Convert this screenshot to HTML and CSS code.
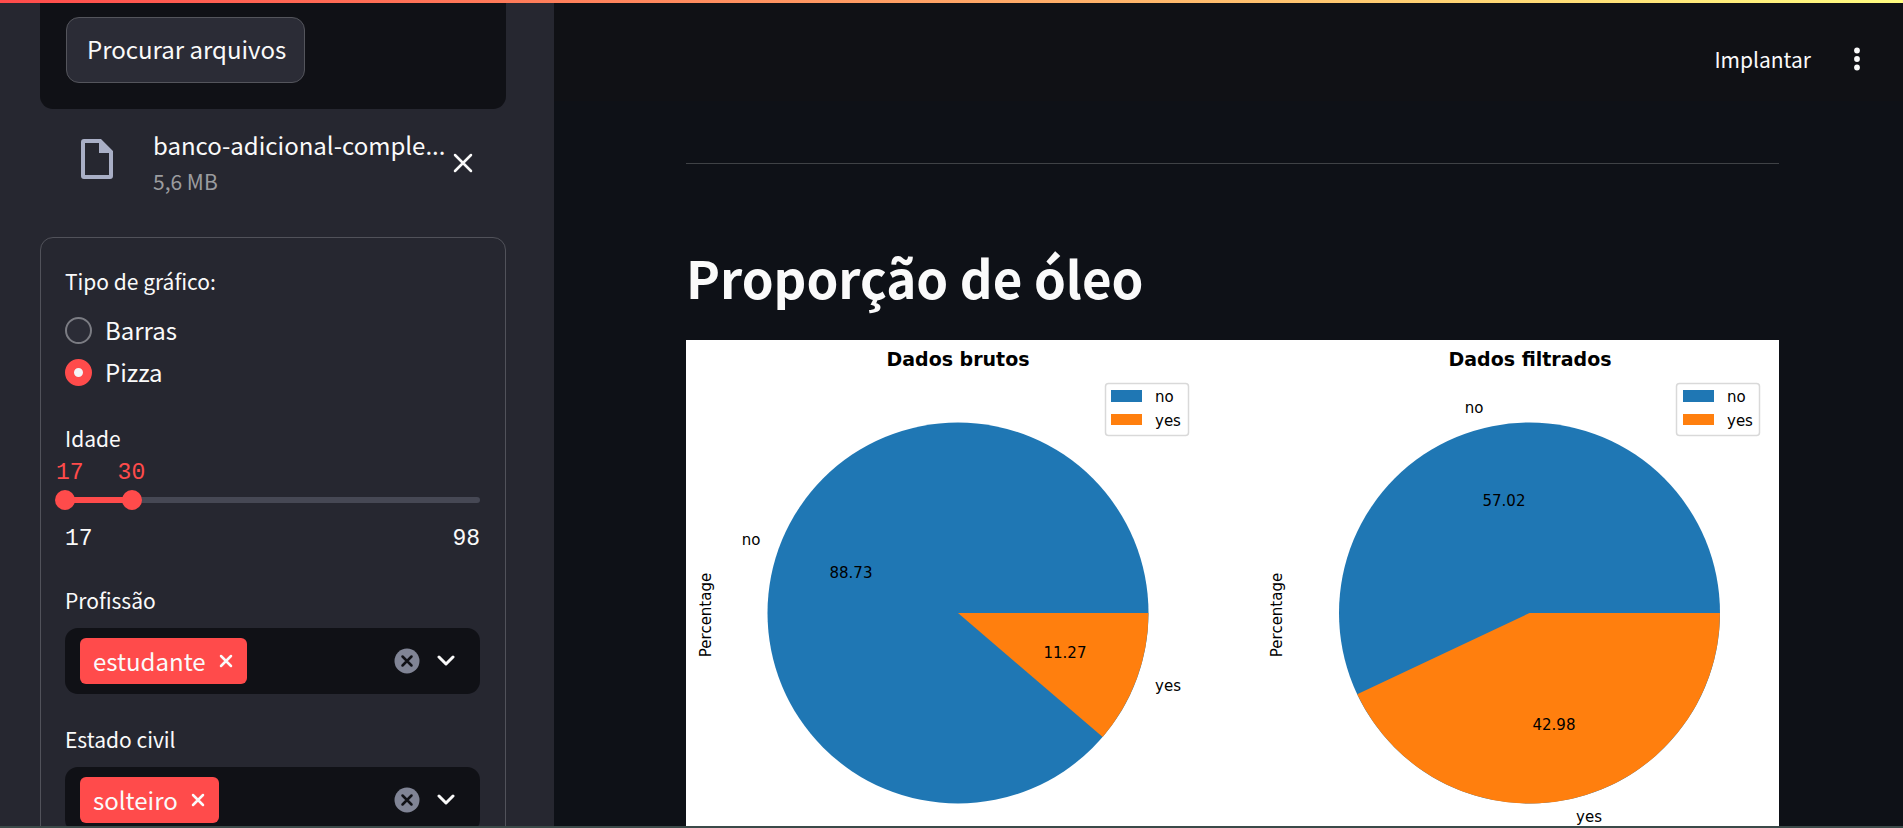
FILE: index.html
```html
<!DOCTYPE html>
<html lang="pt">
<head>
<meta charset="utf-8">
<title>Proporção de óleo</title>
<link rel="stylesheet" href="styles.css">
</head>
<body>
<div class="decoration"></div>
<div class="app">
  <aside class="sidebar">
    <div class="dropzone">
      <button class="browse" type="button">Procurar arquivos</button>
    </div>
    <div class="file">
      <svg class="file-icon" viewBox="0 0 32 40" aria-hidden="true"><path fill-rule="evenodd" d="M3 0H20L32 12V37a3 3 0 0 1-3 3H3a3 3 0 0 1-3-3V3a3 3 0 0 1 3-3ZM4 4V36H28V14H18V4Z"/></svg>
      <div class="file-text">
        <span class="file-name">banco-adicional-comple...</span>
        <span class="file-size">5,6 MB</span>
      </div>
      <button class="icon-button" type="button" aria-label="Remover arquivo">
        <svg class="icon-close" viewBox="0 0 20 20"><path d="M2 2 18 18M18 2 2 18"/></svg>
      </button>
    </div>
    <form class="filters">
      <fieldset class="field radios">
        <legend class="label">Tipo de gráfico:</legend>
        <label class="radio"><input type="radio" name="tipo"><span>Barras</span></label>
        <label class="radio"><input type="radio" name="tipo" checked><span>Pizza</span></label>
      </fieldset>
      <div class="field">
        <label class="label" for="idade-min">Idade</label>
        <div class="values">
          <output class="value value-first" for="idade-min">17</output>
          <output class="value" for="idade-max" style="left: 16%">30</output>
        </div>
        <div class="slider">
          <div class="track"><div class="range" style="width: 16%"></div></div>
          <input id="idade-min" class="thumb" type="range" min="17" max="98" value="17">
          <input class="thumb" type="range" min="17" max="98" value="30" id="idade-max" aria-label="Idade máxima">
        </div>
        <div class="bounds"><span>17</span><span>98</span></div>
      </div>
      <div class="field">
        <label class="label" for="profissao">Profissão</label>
        <div class="select">
          <span class="tag">estudante<button class="tag-remove" type="button" aria-label="Remover estudante"><svg viewBox="0 0 14 14"><path d="M2 2 12 12M12 2 2 12"/></svg></button></span>
          <input class="select-input" id="profissao" type="text">
          <button class="icon-button" type="button" aria-label="Limpar profissão"><svg class="icon-clear" viewBox="0 0 26 26"><circle cx="13" cy="13" r="12.5"/><path d="M8.500 8.500 17.500 17.500M17.500 8.500 8.500 17.500"/></svg></button>
          <button class="icon-button" type="button" aria-label="Abrir profissão"><svg class="icon-chevron" viewBox="0 0 18 12"><path d="M2 2 9 9 16 2"/></svg></button>
        </div>
      </div>
      <div class="field">
        <label class="label" for="estado">Estado civil</label>
        <div class="select">
          <span class="tag">solteiro<button class="tag-remove" type="button" aria-label="Remover solteiro"><svg viewBox="0 0 14 14"><path d="M2 2 12 12M12 2 2 12"/></svg></button></span>
          <input class="select-input" id="estado" type="text">
          <button class="icon-button" type="button" aria-label="Limpar estado civil"><svg class="icon-clear" viewBox="0 0 26 26"><circle cx="13" cy="13" r="12.5"/><path d="M8.500 8.500 17.500 17.500M17.500 8.500 8.500 17.500"/></svg></button>
          <button class="icon-button" type="button" aria-label="Abrir estado civil"><svg class="icon-chevron" viewBox="0 0 18 12"><path d="M2 2 9 9 16 2"/></svg></button>
        </div>
      </div>
    </form>
  </aside>
  <main class="main">
    <header class="toolbar">
      <button class="deploy" type="button">Implantar</button>
      <button class="icon-button" type="button" aria-label="Menu"><svg class="icon-dots" viewBox="0 0 6 24"><circle cx="3" cy="3.500" r="2.900"/><circle cx="3" cy="12" r="2.900"/><circle cx="3" cy="20.500" r="2.900"/></svg></button>
    </header>
    <div class="content">
      <hr class="divider">
      <h2 class="title">Proporção de óleo</h2>
      <svg class="chart" viewBox="0 0 1093 545" role="img" aria-label="Dados brutos e dados filtrados">
        <rect class="paper" width="1093" height="545"/>
        <g>
          <text class="chart-title" x="272" y="26">Dados brutos</text>
          <circle class="no" cx="272" cy="273" r="190.500"/>
          <path class="yes" d="M272 273H462.500A190.500 190.500 0 0 1 416.700 396.900Z"/>
          <rect class="legend" x="419.500" y="43.500" width="83" height="52" rx="3"/>
          <rect class="no" x="425" y="50" width="31" height="12"/>
          <rect class="yes" x="425" y="74" width="31" height="11"/>
          <text class="start" x="469" y="62">no</text>
          <text class="start" x="469" y="86">yes</text>
          <text x="65" y="205">no</text>
          <text x="165" y="238">88.73</text>
          <text x="379" y="318">11.27</text>
          <text x="482" y="351">yes</text>
          <text transform="translate(25 275) rotate(-90)">Percentage</text>
        </g>
        <g>
          <text class="chart-title" x="844" y="26">Dados filtrados</text>
          <circle class="no" cx="843.500" cy="273" r="190.500"/>
          <path class="yes" d="M843.500 273H1034A190.500 190.500 0 0 1 671.200 354.300Z"/>
          <rect class="legend" x="990.500" y="43.500" width="83" height="52" rx="3"/>
          <rect class="no" x="997" y="50" width="31" height="12"/>
          <rect class="yes" x="997" y="74" width="31" height="11"/>
          <text class="start" x="1041" y="62">no</text>
          <text class="start" x="1041" y="86">yes</text>
          <text x="788" y="73">no</text>
          <text x="818" y="166">57.02</text>
          <text x="868" y="390">42.98</text>
          <text x="903" y="482">yes</text>
          <text transform="translate(596 275) rotate(-90)">Percentage</text>
        </g>
      </svg>
    </div>
  </main>
</div>
<div class="edge"></div>
</body>
</html>
```
FILE: styles.css
```css
* { box-sizing: border-box; }

body {
  margin: 0;
  height: 100vh;
  overflow: hidden;
  background: #0e1117;
  color: #fafafa;
  font: 24px/36px "Noto Sans CJK SC", "Noto Sans", sans-serif;
}

button, input {
  font: inherit;
  color: inherit;
}

button {
  border: 0;
  padding: 0;
  background: none;
}

svg { display: block; }

.decoration {
  position: fixed;
  inset: 0 0 auto 0;
  z-index: 2;
  height: 3px;
  background: linear-gradient(90deg, #ff4b4b, #fffd80);
}

.edge {
  position: fixed;
  inset: auto 0 0 0;
  z-index: 2;
  height: 2px;
  background: #3b4a49;
}

.app {
  display: flex;
  height: 100vh;
}

.sidebar {
  flex: 0 0 554px;
  padding: 0 48px 0 40px;
  overflow: hidden;
  background: #262730;
}

.dropzone {
  padding: 17px 26px 26px;
  border-radius: 0 0 13px 13px;
  background: #101116;
}

.browse {
  display: block;
  height: 66px;
  padding: 0 18px 2px 20px;
  border: 1px solid #54555c;
  border-radius: 13px;
  background: #2b2c36;
}

.file {
  display: flex;
  align-items: center;
  padding: 18px 33px 0 41px;
}

.file-icon {
  width: 32px;
  height: 40px;
  margin-bottom: 8px;
  fill: #a9afc6;
}

.file-text {
  display: flex;
  flex: 1;
  flex-direction: column;
  min-width: 0;
  margin-left: 40px;
  white-space: nowrap;
}

.file-size {
  color: #9b9c9f;
  font-size: 21px;
}

.icon-button {
  flex: none;
}

.icon-close {
  width: 20px;
  height: 20px;
}

.icon-close path,
.tag-remove path,
.icon-clear path,
.icon-chevron path {
  fill: none;
  stroke: #fafafa;
  stroke-width: 2.5;
  stroke-linecap: round;
}

.filters {
  display: flex;
  flex-direction: column;
  gap: 33px;
  margin-top: 38px;
  padding: 31px 25px 40px 24px;
  border: 1px solid #51525a;
  border-radius: 13px;
}

.field {
  min-width: 0;
  margin: 0;
  padding: 0;
  border: 0;
}

.label {
  display: block;
  padding: 0;
  font-size: 21px;
  line-height: 24px;
}

.radios .label { margin-bottom: 16px; }

.radio {
  display: flex;
  align-items: center;
  gap: 13px;
  height: 42px;
}

.radio input {
  appearance: none;
  width: 27px;
  height: 27px;
  margin: 0;
  border: 2px solid #7b7c83;
  border-radius: 50%;
  background: #2b2c36;
}

.radio input:checked {
  border: 9px solid #ff4b4b;
  background: #f4f4f6;
}

.values {
  position: relative;
  height: 40px;
}

.value {
  position: absolute;
  top: 11px;
  color: #ff4b4b;
  font: 23px/24px "Liberation Mono", monospace;
  transform: translateX(-50%);
}

.value-first {
  left: -9px;
  transform: none;
}

.slider {
  position: relative;
  height: 20px;
  padding-top: 7px;
}

.track {
  height: 6px;
  border-radius: 3px;
  background: #464854;
}

.range {
  height: 6px;
  background: #ff4b4b;
}

.thumb {
  appearance: none;
  position: absolute;
  top: 0;
  left: -10px;
  width: calc(100% + 20px);
  height: 20px;
  margin: 0;
  background: none;
  pointer-events: none;
}

.thumb::-webkit-slider-thumb {
  appearance: none;
  width: 20px;
  height: 20px;
  border-radius: 50%;
  background: #ff4b4b;
  pointer-events: auto;
}

.bounds {
  display: flex;
  justify-content: space-between;
  padding: 17px 0 4px;
  font: 23px/24px "Liberation Mono", monospace;
}

.select {
  display: flex;
  align-items: center;
  height: 66px;
  margin-top: 16px;
  padding: 0 25px 0 15px;
  border-radius: 13px;
  background: #101116;
}

.tag {
  display: flex;
  align-items: center;
  gap: 13px;
  height: 46px;
  padding: 0 14px 0 13px;
  border-radius: 6px;
  background: #ff4b4b;
}

.tag-remove svg {
  width: 14px;
  height: 14px;
}

.select-input {
  flex: 1;
  min-width: 0;
  height: 46px;
  border: 0;
  outline: 0;
  background: none;
}

.icon-clear {
  width: 26px;
  height: 26px;
  margin-right: 17px;
}

.icon-clear circle { fill: #808495; }
.icon-clear path { stroke: #101116; }

.icon-chevron {
  width: 18px;
  height: 12px;
}

.icon-chevron path {
  stroke-width: 3;
  stroke-linejoin: round;
}

.main {
  flex: 1;
  min-width: 0;
  overflow: hidden;
}

.toolbar {
  display: flex;
  align-items: center;
  justify-content: flex-end;
  gap: 43px;
  height: 101px;
  padding: 17px 43px 0 0;
  background: #101115;
}

.deploy {
  font-size: 21px;
}

.icon-dots {
  width: 6px;
  height: 24px;
  fill: #fafafa;
}

.content {
  padding: 62px 124px 0 132px;
}

.divider {
  margin: 0;
  border: 0;
  border-top: 1px solid #3f4246;
}

.title {
  margin: 73px 0 23px;
  font-size: 51px;
  line-height: 80px;
  font-weight: 700;
}

.chart {
  width: 100%;
}

.chart text {
  font-family: "DejaVu Sans", sans-serif;
  font-size: 15px;
  text-anchor: middle;
}

.chart .chart-title {
  font-size: 19px;
  font-weight: 700;
}

.chart .start { text-anchor: start; }

.paper { fill: #fff; }
.no { fill: #1f77b4; }
.yes { fill: #ff7f0e; }

.legend {
  fill: #fff;
  stroke: #d9d9d9;
  stroke-width: 1.5;
}
```
